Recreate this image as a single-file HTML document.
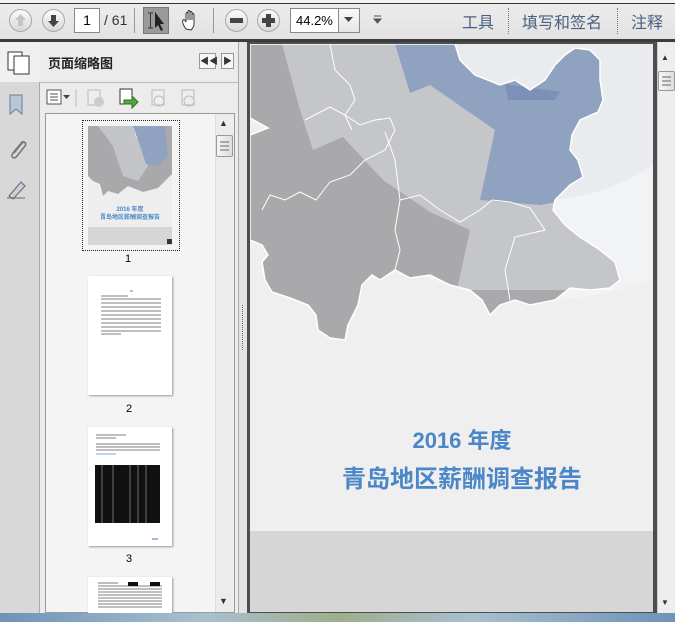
<!DOCTYPE html>
<html><head><meta charset="utf-8"><style>
*{margin:0;padding:0;box-sizing:border-box}
body{width:675px;height:622px;overflow:hidden;background:#dcdcdc;font-family:"Liberation Sans","Noto Sans CJK SC",sans-serif;position:relative}
.a{position:absolute}
.cb{border-radius:50%;border:1px solid #a8a8a8;background:linear-gradient(#fbfbfb,#d8d8d8)}
.tb{color:#4b5f80;font-size:16px;top:9px}
.dsep{border-left:1px dotted #777;width:0}
</style></head><body>
<div class="a" style="left:0;top:0;width:675px;height:3px;background:#f4f4f4"></div>
<div class="a" style="left:0;top:3px;width:675px;height:1px;background:#333"></div>
<div class="a" style="left:0;top:4px;width:675px;height:35px;background:linear-gradient(#ececec,#e2e2e2)"></div>
<div class="a" style="left:0;top:39px;width:675px;height:3px;background:#3c3c3c"></div>

<div class="a cb" style="left:9px;top:9px;width:23px;height:23px"></div>
<svg class="a" style="left:9px;top:9px" width="23" height="23"><path d="M11.5 5 L17 11 H14 V17 H9 V11 H6 Z" fill="#c4c4c4"/></svg>
<div class="a cb" style="left:42px;top:9px;width:23px;height:23px"></div>
<svg class="a" style="left:42px;top:9px" width="23" height="23"><path d="M11.5 18 L17 12 H14 V6 H9 V12 H6 Z" fill="#444"/></svg>
<div class="a" style="left:74px;top:8px;width:26px;height:25px;background:#fff;border:1px solid #888;font-size:14px;text-align:center;line-height:23px">1</div>
<div class="a" style="left:104px;top:12px;font-size:14px;color:#333">/ 61</div>
<div class="a" style="left:134px;top:8px;width:1px;height:25px;background:#999"></div>
<div class="a" style="left:143px;top:7px;width:26px;height:27px;background:#9a9a9a;border:1px solid #777"></div>
<svg class="a" style="left:143px;top:7px" width="26" height="27"><path d="M5 6h5M7.5 6v15M5 21h5" stroke="#333" fill="none"/><path d="M12 5 L12 21 L15 18 L18 24 L20 23 L17 17 L21 17 Z" fill="#222"/></svg>
<svg class="a" style="left:178px;top:7px" width="26" height="27"><path d="M8 22 C5 18 4 15 5 13 C6 12 7 13 8 15 V7 C8 5 10 5 10 7 V13 V5 C10 3 12 3 12 5 V13 V6 C12 4 14 4 14 6 V13 V8 C14 6 16 6 16 8 V17 C16 20 14 22 13 23 Z" fill="#fff" stroke="#333"/></svg>
<div class="a" style="left:213px;top:8px;width:1px;height:25px;background:#999"></div>
<div class="a cb" style="left:225px;top:9px;width:23px;height:23px"></div>
<div class="a" style="left:230px;top:18px;width:13px;height:5px;background:#444"></div>
<div class="a cb" style="left:257px;top:9px;width:23px;height:23px"></div>
<div class="a" style="left:262px;top:18px;width:13px;height:5px;background:#444"></div>
<div class="a" style="left:266px;top:14px;width:5px;height:13px;background:#444"></div>
<div class="a" style="left:290px;top:8px;width:70px;height:25px;background:#fff;border:1px solid #888;font-size:13px;line-height:23px;padding-left:5px">44.2%</div>
<div class="a" style="left:338px;top:8px;width:22px;height:25px;border:1px solid #888;background:linear-gradient(#fafafa,#e6e6e6)"></div>
<svg class="a" style="left:344px;top:17px" width="10" height="6"><path d="M0 0H9L4.5 5Z" fill="#444"/></svg>
<svg class="a" style="left:373px;top:15px" width="10" height="10"><path d="M1 1H8M1 4H8L4.5 8Z" fill="#555" stroke="#555" stroke-width="1"/></svg>
<div class="a tb" style="left:462px">工具</div>
<div class="a dsep" style="left:508px;top:8px;height:26px"></div>
<div class="a tb" style="left:522px">填写和签名</div>
<div class="a dsep" style="left:617px;top:8px;height:26px"></div>
<div class="a tb" style="left:631px">注释</div>

<div class="a" style="left:0;top:42px;width:40px;height:40px;background:#f0f0f0"></div>
<div class="a" style="left:0;top:82px;width:40px;height:531px;background:#d8d8d8;border-right:1px solid #aaa"></div>
<svg class="a" style="left:5px;top:47px" width="28" height="30"><rect x="3" y="5" width="14" height="18" fill="#fff" stroke="#333"/><rect x="9" y="9" width="15" height="18" fill="#fff" stroke="#333"/></svg>
<svg class="a" style="left:6px;top:92px" width="24" height="26"><path d="M4 3 H16 V22 L10 17 L4 22 Z" fill="#b9c6d8" stroke="#6a7e99"/></svg>
<svg class="a" style="left:6px;top:136px" width="24" height="26"><path d="M17 5 L7 17 C4 21 8 24 11 20 L19 10 C21 7 18 5 16 7 L8 17" fill="none" stroke="#777" stroke-width="1.6"/></svg>
<svg class="a" style="left:5px;top:178px" width="26" height="24"><path d="M4 18 L16 4 L20 8 L8 21 Z" fill="#c8d0dc" stroke="#666"/><path d="M2 20 H20" stroke="#666"/></svg>

<div class="a" style="left:40px;top:42px;width:198px;height:571px;background:#ececec"></div>
<div class="a" style="left:48px;top:53px;font-size:13px;font-weight:bold;color:#222">页面缩略图</div>
<div class="a" style="left:199px;top:53px;width:17px;height:16px;border:1px solid #999;background:#f6f6f6;font-size:9px;text-align:center;line-height:14px;color:#333">◀◀</div>
<div class="a" style="left:221px;top:53px;width:13px;height:16px;border:1px solid #999;background:#f6f6f6;font-size:9px;text-align:center;line-height:14px;color:#333">▶</div>
<div class="a" style="left:40px;top:82px;width:198px;height:1px;background:#bbb"></div>
<svg class="a" style="left:44px;top:86px" width="170" height="24">
<rect x="3" y="4" width="14" height="14" fill="#fff" stroke="#555"/><path d="M6 8h8M6 11h8M6 14h8" stroke="#555"/><path d="M19 9h7l-3.5 4z" fill="#444"/>
<path d="M32 3v18" stroke="#bbb"/>
<rect x="44" y="4" width="12" height="15" fill="#eee" stroke="#bbb"/><circle cx="55" cy="16" r="5" fill="#ccc"/>
<rect x="76" y="3" width="12" height="15" fill="#fff" stroke="#333"/><path d="M80 14 h8 v-4 l6 6 -6 6 v-4 h-8z" fill="#4fa83a" stroke="#2d6e1e"/>
<rect x="108" y="4" width="12" height="15" fill="#eee" stroke="#bbb"/><circle cx="115" cy="15" r="5" fill="none" stroke="#bbb"/>
<rect x="138" y="4" width="12" height="15" fill="#eee" stroke="#bbb"/><circle cx="145" cy="15" r="5" fill="none" stroke="#bbb"/>
</svg>
<div class="a" style="left:45px;top:113px;width:190px;height:500px;background:#f4f4f4;border:1px solid #9a9a9a"></div>
<div class="a" style="left:215px;top:114px;width:19px;height:498px;background:#ececec;border-left:1px solid #ddd"></div>
<div class="a" style="left:219px;top:118px;font-size:9px;color:#333">▲</div>
<div class="a" style="left:216px;top:135px;width:17px;height:22px;border:1px solid #999;border-radius:2px;background:linear-gradient(90deg,#f6f6f6,#ddd)"></div>
<svg class="a" style="left:219px;top:140px" width="11" height="12"><path d="M1 2h9M1 6h9M1 10h9" stroke="#666"/></svg>
<div class="a" style="left:219px;top:596px;font-size:9px;color:#333">▼</div>

<div class="a" style="left:82px;top:120px;width:98px;height:131px;border:1px dotted #222"></div>
<svg class="a" style="left:88px;top:126px" width="86" height="120"><rect width="84" height="119" fill="#eee"/>
<path d="M0 0H45L48 12L58 18L70 10L77 0H84V48L70 62L55 66L40 60L30 68L20 65L15 70L12 58L5 55L0 50Z" fill="#a9a9ab"/>
<path d="M10 0H45L48 12L58 18L60 40L50 55L35 50L25 20Z" fill="#c4c5c9"/>
<path d="M45 0H77L80 30L70 40L58 38L52 20Z" fill="#8fa2bf"/>
<rect y="101" width="84" height="18" fill="#d6d6d6"/>
<text x="42" y="85" font-size="6" fill="#4a86c8" text-anchor="middle" font-weight="bold">2016 年度</text>
<text x="42" y="93" font-size="6" fill="#4a86c8" text-anchor="middle" font-weight="bold">青岛地区薪酬调查报告</text>
<rect x="79" y="113" width="5" height="5" fill="#333"/></svg>
<div class="a" style="left:125px;top:253px;font-size:11px">1</div>
<div class="a" style="left:88px;top:276px;width:84px;height:119px;background:#fff;box-shadow:1px 1px 2px #999"></div>
<svg class="a" style="left:88px;top:276px" width="84" height="119"><g stroke="#555" stroke-width=".7"><path d="M42 15h3M13 20h27M13 23h60M13 27h60M13 31h60M13 35h60M13 39h60M13 43h60M13 47h60M13 51h60M13 55h60M13 58h20"/></g></svg>
<div class="a" style="left:126px;top:403px;font-size:11px">2</div>
<div class="a" style="left:88px;top:427px;width:84px;height:119px;background:#fff;box-shadow:1px 1px 2px #999"></div>
<svg class="a" style="left:88px;top:427px" width="84" height="119"><g stroke="#555" stroke-width=".7"><path d="M8 8h30M8 11h20M8 17h64M8 20h64M8 23h64"/><path d="M8 27h20" stroke="#4a86c8"/></g><rect x="7" y="38" width="65" height="58" fill="#111"/><g stroke="#ccc" stroke-width=".5"><path d="M14 38v58M25 38v58M42 38v58M50 38v58M58 38v58"/></g><path d="M64 112h6" stroke="#4a6fb0"/></svg>
<div class="a" style="left:126px;top:553px;font-size:11px">3</div>
<div class="a" style="left:88px;top:577px;width:84px;height:36px;background:#fff;box-shadow:1px 1px 2px #999"></div>
<svg class="a" style="left:88px;top:577px" width="84" height="35"><g stroke="#555" stroke-width=".7"><path d="M10 6h20M10 9h64M10 12h64M10 15h64M10 18h64M10 21h64M10 24h64M10 27h64M10 30h64"/></g><rect x="40" y="5" width="10" height="4" fill="#111"/><rect x="62" y="5" width="10" height="4" fill="#111"/></svg>

<div class="a" style="left:238px;top:42px;width:9px;height:571px;background:#e3e3e3;border-left:1px solid #aaa"></div>
<div class="a" style="left:242px;top:305px;width:2px;height:45px;border-left:1px dotted #666"></div>

<div class="a" style="left:247px;top:42px;width:410px;height:571px;background:#4e4e4e"></div>
<svg class="a" style="left:250px;top:44px" width="403" height="568" viewBox="250 44 403 568">
<defs><clipPath id="land"><path id="lp" d="M250 44H455L460 60L475 75L500 85L515 80L530 90L545 80L555 65L565 55L575 48L590 50L600 60L600 80L603 100L598 112L580 120L572 135L570 150L578 160L583 177L570 185L555 200L553 210L565 225L580 237L600 250L615 262L620 280L610 288L590 290L570 288L555 300L530 305L515 300L500 305L490 315L482 300L470 290L450 285L430 275L410 278L395 270L380 280L372 275L362 285L358 305L348 325L345 340L330 338L318 330L316 315L308 305L290 298L272 292L265 280L262 262L268 255L262 245L250 240V135L268 128L250 118Z"/></clipPath></defs>
<rect x="250" y="44" width="403" height="568" fill="#efefef"/>
<circle cx="540" cy="0" r="300" fill="#f2f3f5"/>
<circle cx="540" cy="0" r="200" fill="#e9ebef"/>
<rect x="250" y="531" width="403" height="81" fill="#d6d6d6"/>
<g clip-path="url(#land)">
<rect x="250" y="44" width="403" height="300" fill="#a9a9ab"/>
<path d="M282 44 L300 110 L313 150 L343 137 L383 180 L430 212 L470 230 L457 290 L620 290 L620 44Z" fill="#c5c6ca"/>
<path d="M395 44 L410 93 L430 85 L495 130 L480 200 L540 205 L625 190 L625 44Z" fill="#8fa2bf"/>
<path d="M505 84 L560 92 L555 100 L508 100Z" fill="#7c90b8"/>
</g>
<use href="#lp" fill="none" stroke="#fff" stroke-width="1.5"/>
<g fill="none" stroke="#fff" stroke-width="1">
<path d="M330 44 L335 70 L350 85 L355 100 L345 115 L352 130"/>
<path d="M305 120 L330 107 L345 115 L360 125 L375 120 L390 118 L395 130 L385 150 L365 160 L350 175 L330 182 L316 200 L300 192 L285 200 L270 195 L262 210"/>
<path d="M385 132 L395 160 L400 200 L395 230 L400 250 L395 270"/>
<path d="M400 200 L420 195 L440 210 L460 222 L480 210 L492 200"/>
<path d="M492 200 L510 202 L530 208 L545 230 L515 237 L505 270 L510 300"/>
</g>
<text x="462" y="448" font-size="22" font-weight="bold" fill="#4a86c8" text-anchor="middle" font-family="Liberation Sans,Noto Sans CJK SC,sans-serif">2016 年度</text>
<text x="462" y="487" font-size="24" font-weight="bold" fill="#4a86c8" text-anchor="middle" font-family="Liberation Sans,Noto Sans CJK SC,sans-serif">青岛地区薪酬调查报告</text>
</svg>

<div class="a" style="left:657px;top:42px;width:18px;height:571px;background:#eeeeee;border-left:1px solid #ccc"></div>
<div class="a" style="left:661px;top:53px;font-size:8px;color:#333">▲</div>
<div class="a" style="left:658px;top:71px;width:17px;height:20px;border:1px solid #999;border-radius:2px;background:linear-gradient(90deg,#f6f6f6,#ddd)"></div>
<svg class="a" style="left:661px;top:75px" width="11" height="12"><path d="M1 2h9M1 6h9M1 10h9" stroke="#666"/></svg>
<div class="a" style="left:661px;top:598px;font-size:8px;color:#333">▼</div>

<div class="a" style="left:0;top:613px;width:675px;height:9px;background:linear-gradient(90deg,#6d93b8,#a9c0cf 30%,#9fae8a 50%,#a8bfcf 70%,#6d93b8)"></div>
</body></html>
